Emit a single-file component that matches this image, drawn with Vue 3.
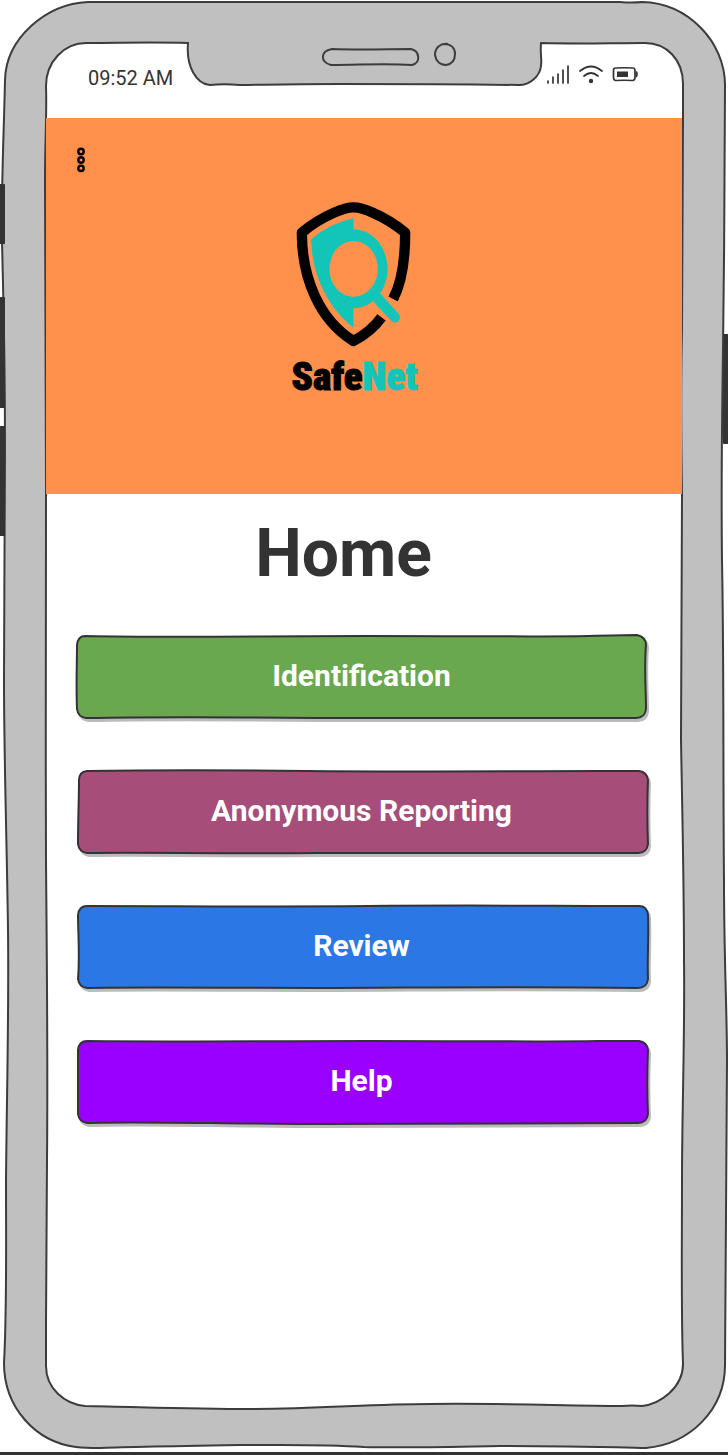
<script setup>
const actions = [
  {
    label: 'Identification',
    fill: '#6aa84f',
    outline:
      'M8 2 C100 4 180 2 290 2 S470 3 510 2 Q545 1 559 1 Q568 3 568 11 C566 35 568 55 568 75 Q567 84 558 84 C430 83 330 85 240 84 S60 83 9 84 Q1 83 0 75 C-1 50 0 30 0 11 Q1 2 8 2 Z',
  },
  {
    label: 'Anonymous Reporting',
    fill: '#a64d79',
    outline:
      'M10 2 C80 1 140 1 230 2 S470 2 520 2 L561 2 Q569 3 570 11 C569 35 569 50 570 75 Q569 84 560 84 C430 84 330 83 240 84 S60 83 10 84 Q2 83 1 75 C1 50 2 30 2 11 Q2 3 10 2 Z',
  },
  {
    label: 'Review',
    fill: '#2b78e4',
    outline:
      'M10 2 C100 2 180 3 290 2 S470 2 561 2 Q569 2 570 11 C571 35 569 55 570 75 Q569 84 560 84 C430 82 330 84 240 84 S60 83 10 84 Q2 83 1 75 C3 50 1 30 1 11 Q2 2 10 2 Z',
  },
  {
    label: 'Help',
    fill: '#9900ff',
    outline:
      'M10 2 C100 3 180 2 290 2 S470 3 520 2 L561 2 Q569 3 570 11 C569 35 569 55 570 75 Q569 84 560 84 C430 84 330 85 240 85 S60 82 10 84 Q2 83 1 75 C1 50 1 30 1 11 Q2 2 10 2 Z',
  },
]
</script>

<template>
  <div class="phone">
    <svg class="frame" viewBox="0 0 728 1455" preserveAspectRatio="none" aria-hidden="true">
      <rect x="723" y="334" width="8" height="110" rx="1" fill="#333" />
      <path
        fill="#c0c0c0"
        stroke="#3c3c3c"
        stroke-width="2"
        fill-rule="evenodd"
        d="M88 2 C260 1 440 3 620 2 Q632 3 642 2 C688 3 725 42 725 85 C725 180 724 260 723 350 C722 420 721 480 722 560 C724 660 723 780 724 880 C724 960 727 1010 727 1060 C726 1130 725 1240 725 1365 C725 1410 690 1444 646 1448 C600 1447 560 1446 500 1446 C440 1447 400 1448 364 1447 C320 1444 290 1445 240 1445 C180 1446 120 1447 100 1448 Q85 1448 76 1447 C36 1442 4 1408 4 1363 C7 1310 6 1240 6 1180 C7 1080 9 1010 8 930 C7 850 4 760 4 680 C4 600 5 540 5 450 C5 340 3 290 2 240 C1 190 4 130 5 80 C6 38 46 4 88 2 Z
           M86 43 C64 43 46 62 46 86 C47 110 45 140 45 180 C45 280 46 380 46 494 C47 640 45 740 46 860 C47 980 48 1060 47 1160 C46 1240 46 1300 46 1366 C46 1388 64 1404 85 1406 C140 1407 190 1409 250 1409 C320 1409 370 1404 430 1404 C500 1403 570 1406 622 1406 Q632 1405 642 1406 C660 1404 683 1388 683 1364 C681 1310 682 1240 682 1180 C682 1110 685 1030 684 960 C684 880 682 800 681 740 C681 660 682 580 682 494 C681 430 681 370 682 330 C683 250 683 180 683 118 L683 84 C683 60 667 43 645 43 C610 43 580 44 541 43 C540 54 542 58 541 66 C540 76 530 85 519 85 C450 84 400 84 340 84 S260 85 240 85 C228 84 220 84 210 85 C196 84 186 66 188 43 C150 42 120 43 86 43 Z"
      />
      <g fill="none" stroke="#3c3c3c" stroke-width="2">
        <path d="M332 49 C360 50 390 49 411 49 C420 51 421 63 412 65 C385 63 360 65 331 65 C320 62 320 51 332 49 Z" />
        <path d="M448 44 C440 43 435 48 435 55 C436 61 440 65 446 65 C452 64 455 60 455 54 C455 48 451 44 444 44" />
      </g>
      <g fill="#333">
        <rect x="-3" y="184" width="8" height="60" rx="1" />
        <rect x="-3" y="297" width="8" height="111" rx="1" />
        <rect x="-3" y="426" width="8" height="110" rx="1" />
        <rect x="0" y="1452" width="728" height="3" />
      </g>
    </svg>

    <div class="status">
      <span class="time">09:52 AM</span>
      <div class="indicators" role="img" aria-label="Signal, Wi-Fi and battery">
        <svg width="24" height="22" viewBox="0 0 24 22" fill="none" stroke="#333" stroke-linecap="round">
          <path d="M2 18v2M7 14v6M12 11v9M17 7v13M22 3v17" stroke-width="1.7" />
        </svg>
        <svg width="26" height="22" viewBox="0 0 26 22" fill="none" stroke="#333" stroke-width="1.7" stroke-linecap="round">
          <path d="M2 8 Q13 -1 24 8M6 13 Q13 7 20 13" />
          <circle cx="13" cy="18" r="2.2" fill="#333" stroke="none" />
        </svg>
        <svg width="26" height="22" viewBox="0 0 26 22" fill="none" stroke="#333" stroke-width="1.7">
          <path d="M3.5 5 Q12 4.5 21 5 Q23 5 23 8 V14 Q23 17 21 17.5 Q12 17 3.5 17.5 Q1.5 17 1.5 14.5 V7.5 Q1.5 5 3.5 5 Z" />
          <path d="M24 8.5 Q26 11 24 14" />
          <rect x="5" y="8.5" width="11" height="5.5" fill="#333" stroke="none" />
        </svg>
      </div>
    </div>

    <header class="hero">
      <button class="menu" type="button" aria-label="Menu">
        <svg width="10" height="26" viewBox="0 0 10 26" fill="none" stroke="#000" stroke-width="2.4">
          <circle cx="5" cy="4.5" r="2.7" />
          <circle cx="5" cy="13" r="2.7" />
          <circle cx="5" cy="21.3" r="2.7" />
        </svg>
      </button>
      <div class="brand">
        <svg width="117" height="150" viewBox="80 30 350 450" aria-hidden="true">
          <path
            d="M371 327 C398 275 407 200 407 128 Q365 92 310 68 Q275 52 252 52 Q229 52 194 68 Q139 92 97 128 C97 265 150 390 252 453 C286 435 314 412 336 382"
            fill="none"
            stroke="#000"
            stroke-width="31"
            stroke-linejoin="round"
          />
          <path
            fill="#12c5b8"
            fill-rule="evenodd"
            d="M252 85 V118 C308 118 354 171 354 237 C354 302 308 355 252 355 V413 C172 350 126 250 125 148 Q180 100 252 85 Z M252 153 C212 153 180 190 180 237 C180 283 212 320 252 320 C292 320 325 283 325 237 C325 190 292 153 252 153 Z"
          />
          <path d="M318 318 L376 382" fill="none" stroke="#12c5b8" stroke-width="31" stroke-linecap="round" />
        </svg>
        <p class="name">Safe<span>Net</span></p>
      </div>
    </header>

    <main class="content">
      <h1>Home</h1>
      <nav class="actions" aria-label="Home">
        <button v-for="action in actions" :key="action.label" class="action" type="button">
          <svg viewBox="0 0 572 85" preserveAspectRatio="none" aria-hidden="true">
            <path class="shade" :d="action.outline" />
            <path :d="action.outline" :fill="action.fill" stroke="#333" stroke-width="2" />
          </svg>
          <span>{{ action.label }}</span>
        </button>
      </nav>
    </main>
  </div>
</template>

<style>
body {
  margin: 0;
  background: #fff;
}
</style>

<style scoped>
.phone {
  position: relative;
  box-sizing: border-box;
  min-height: 100vh;
  padding: 43px 46px 49px;
  overflow: hidden;
  color: #333;
  font-family: Roboto, 'Liberation Sans', sans-serif;
}
.frame {
  position: absolute;
  inset: 0;
  width: 100%;
  height: 100%;
}
.status {
  position: relative;
  display: flex;
  align-items: center;
  justify-content: space-between;
  box-sizing: border-box;
  height: 75px;
  padding: 0 44px 6px 42px;
}
.time {
  font-size: 20px;
  line-height: 24px;
}
.indicators {
  display: flex;
  gap: 8px;
  padding-bottom: 8px;
}
.hero {
  position: relative;
  box-sizing: border-box;
  height: 376px;
  padding: 29px 30px 0;
  background: #ff914d;
}
.menu {
  display: block;
  padding: 0;
  border: 0;
  background: none;
  cursor: pointer;
}
.menu svg {
  display: block;
}
.brand {
  display: flex;
  flex-direction: column;
  align-items: center;
  padding: 27px 19px 0 0;
}
.brand svg {
  display: block;
}
.name {
  margin: 4px 0 0;
  color: #000;
  font-family: 'Liberation Sans Narrow', 'Roboto Condensed', Roboto, sans-serif;
  font-size: 39px;
  font-weight: 900;
  line-height: 46px;
  -webkit-text-stroke: 1px currentColor;
}
.name span {
  color: #12c5b8;
}
.content {
  position: relative;
  padding: 24px 32px 0 31px;
}
h1 {
  margin: 0;
  padding-right: 40px;
  font-size: 66px;
  font-weight: 700;
  line-height: 72px;
  text-align: center;
}
.actions {
  display: flex;
  flex-direction: column;
  gap: 50px;
  margin-top: 44px;
}
.action {
  position: relative;
  height: 85px;
  padding: 0 4px 2px 0;
  border: 0;
  background: none;
  color: #fff;
  font-family: inherit;
  font-size: 30px;
  font-weight: 700;
  line-height: 36px;
  cursor: pointer;
}
.action svg {
  position: absolute;
  inset: 0;
  width: 100%;
  height: 100%;
  overflow: visible;
}
.action span {
  position: relative;
}
.shade {
  fill: #bbb;
  stroke: #bbb;
  stroke-width: 2;
  transform: translate(2px, 3px);
}
</style>
